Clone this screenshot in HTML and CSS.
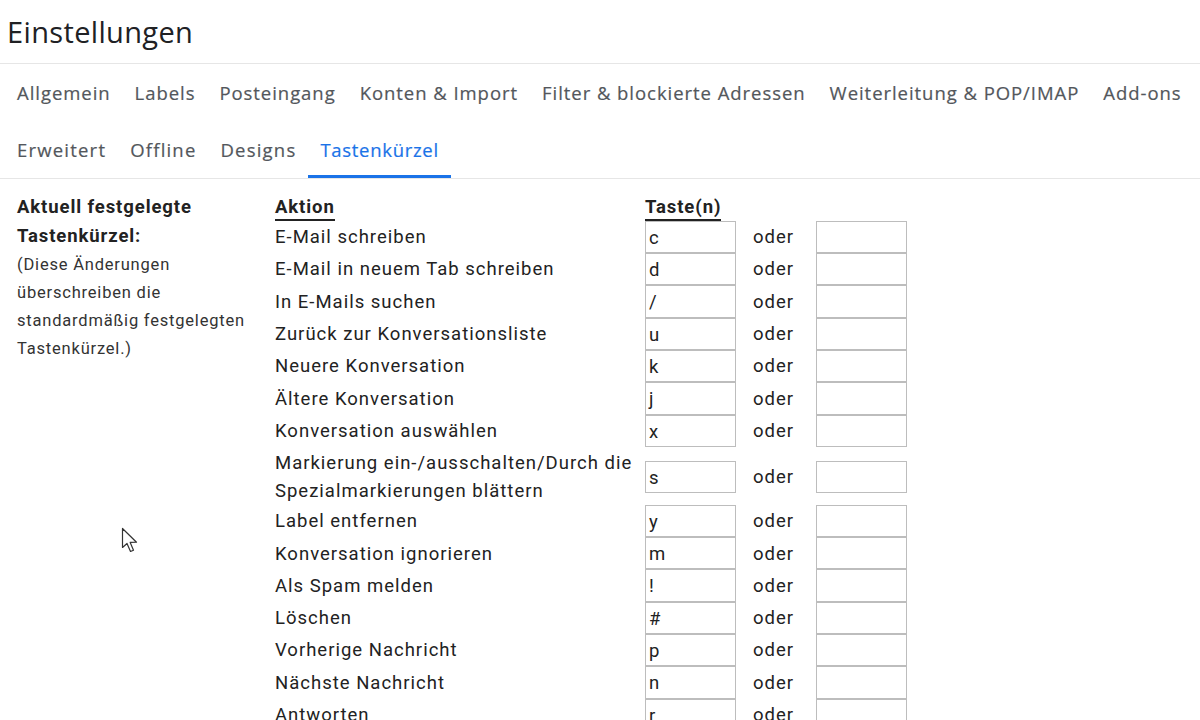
FILE: index.html
```html
<!DOCTYPE html>
<html lang="de">
<head>
<meta charset="utf-8">
<title>Einstellungen</title>
<link rel="stylesheet" href="styles.css">
</head>
<body>
<header class="title-bar">
  <h1 class="title">Einstellungen</h1>
</header>
<nav class="tabs">
  <div class="tab-row">
    <span class="tab">Allgemein</span>
    <span class="tab">Labels</span>
    <span class="tab">Posteingang</span>
    <span class="tab">Konten &amp; Import</span>
    <span class="tab">Filter &amp; blockierte Adressen</span>
    <span class="tab">Weiterleitung &amp; POP/IMAP</span>
    <span class="tab">Add-ons</span>
  </div>
  <div class="tab-row">
    <span class="tab">Erweitert</span>
    <span class="tab">Offline</span>
    <span class="tab">Designs</span>
    <span class="tab active">Tastenkürzel</span>
  </div>
</nav>
<main class="content">
  <aside class="side">
    <div class="side-title">Aktuell festgelegte Tastenkürzel:</div>
    <div class="side-note">(Diese Änderungen überschreiben die standardmäßig festgelegten Tastenkürzel.)</div>
  </aside>
  <table class="keys">
    <thead>
      <tr>
        <th class="col-action"><span class="hd">Aktion</span></th>
        <th class="col-key"><span class="hd">Taste(n)</span></th>
        <th class="col-or"></th>
        <th class="col-key2"></th>
      </tr>
    </thead>
    <tbody>
      <tr><td>E-Mail schreiben</td><td><div class="key">c</div></td><td class="or">oder</td><td><div class="key"></div></td></tr>
      <tr><td>E-Mail in neuem Tab schreiben</td><td><div class="key">d</div></td><td class="or">oder</td><td><div class="key"></div></td></tr>
      <tr><td>In E-Mails suchen</td><td><div class="key">/</div></td><td class="or">oder</td><td><div class="key"></div></td></tr>
      <tr><td>Zurück zur Konversationsliste</td><td><div class="key">u</div></td><td class="or">oder</td><td><div class="key"></div></td></tr>
      <tr><td>Neuere Konversation</td><td><div class="key">k</div></td><td class="or">oder</td><td><div class="key"></div></td></tr>
      <tr><td>Ältere Konversation</td><td><div class="key">j</div></td><td class="or">oder</td><td><div class="key"></div></td></tr>
      <tr><td>Konversation auswählen</td><td><div class="key">x</div></td><td class="or">oder</td><td><div class="key"></div></td></tr>
      <tr class="tall"><td>Markierung ein-/ausschalten/Durch die Spezialmarkierungen blättern</td><td><div class="key">s</div></td><td class="or">oder</td><td><div class="key"></div></td></tr>
      <tr><td>Label entfernen</td><td><div class="key">y</div></td><td class="or">oder</td><td><div class="key"></div></td></tr>
      <tr><td>Konversation ignorieren</td><td><div class="key">m</div></td><td class="or">oder</td><td><div class="key"></div></td></tr>
      <tr><td>Als Spam melden</td><td><div class="key">!</div></td><td class="or">oder</td><td><div class="key"></div></td></tr>
      <tr><td>Löschen</td><td><div class="key">#</div></td><td class="or">oder</td><td><div class="key"></div></td></tr>
      <tr><td>Vorherige Nachricht</td><td><div class="key">p</div></td><td class="or">oder</td><td><div class="key"></div></td></tr>
      <tr><td>Nächste Nachricht</td><td><div class="key">n</div></td><td class="or">oder</td><td><div class="key"></div></td></tr>
      <tr><td>Antworten</td><td><div class="key">r</div></td><td class="or">oder</td><td><div class="key"></div></td></tr>
    </tbody>
  </table>
</main>
<svg class="cursor" width="20" height="28" viewBox="0 0 20 28" aria-hidden="true">
  <path d="M1.5 1.5 L1.5 20.5 L6 16.5 L9.5 24.5 L12.5 23.2 L9.2 15.4 L15.5 15.2 Z" fill="#fff" stroke="#333" stroke-width="1.2" stroke-linejoin="round"/>
</svg>
</body>
</html>
```

FILE: styles.css
```css
* { box-sizing: border-box; }
html, body { margin: 0; padding: 0; background: #fff; }
body {
  font-family: Roboto, "Liberation Sans", sans-serif;
  color: #222;
  width: 1200px;
  height: 720px;
  overflow: hidden;
  position: relative;
}
.title-bar {
  height: 64px;
  border-bottom: 1px solid #e6e6e6;
  padding-left: 7px;
}
.title {
  margin: 0;
  font-family: "Open Sans", Roboto, sans-serif;
  font-weight: 400;
  font-size: 29px;
  line-height: 64px;
  color: #202124;
  letter-spacing: 0.35px;
}
.tabs {
  border-bottom: 1px solid #e6e6e6;
  padding-left: 5px;
}
.tab-row {
  display: flex;
  height: 57px;
}
.tab {
  font-family: "Open Sans", Roboto, sans-serif;
  font-weight: 500;
  font-size: 18.5px;
  color: #53575c;
  padding: 0 12px;
  line-height: 57px;
  white-space: nowrap;
  letter-spacing: 0.95px;
  -webkit-text-stroke: 0.2px #53575c;
}
.tab-row + .tab-row .tab { letter-spacing: 1.2px; }
.tab-row + .tab-row .tab.active {
  letter-spacing: 0.7px;
  color: #1a73e8;
  -webkit-text-stroke: 0.2px #1a73e8;
  box-shadow: inset 0 -3px 0 #1a73e8;
}
.content {
  display: flex;
  padding-top: 14px;
}
.side {
  width: 275px;
  padding-left: 17px;
  padding-right: 10px;
  flex: none;
}
.side-title {
  font-weight: 700;
  font-size: 18.5px;
  line-height: 29px;
  letter-spacing: 0.9px;
  color: #222;
  width: 210px;
}
.side-note {
  font-size: 16.5px;
  line-height: 28px;
  letter-spacing: 0.8px;
  color: #333;
}
.keys {
  border-collapse: collapse;
  font-size: 18.5px;
  letter-spacing: 1px;
}
.keys th {
  text-align: left;
  font-weight: 700;
  padding: 0;
  height: 28px;
  vertical-align: top;
  line-height: 28px;
  letter-spacing: 0.9px;
}
.hd {
  display: inline-block;
  border-bottom: 2px solid #222;
  line-height: 24px;
}
.col-action { width: 370px; }
.col-key { width: 91px; }
.col-or { width: 80px; }
.col-key2 { width: 91px; }
.keys td {
  padding: 0;
  height: 32.3px;
  vertical-align: middle;
  line-height: 28px;
  color: #222;
}
.keys tr.tall td {
  height: 58px;
  padding: 2px 0 0;
}
.keys tr.tall td:first-child { padding-right: 4px; }
.key {
  width: 91px;
  height: 32.3px;
  border: 1px solid #bdbdbd;
  margin-top: -0.5px;
  padding: 2px 0 0 3px;
  font-size: 18.5px;
  line-height: 28px;
  color: #222;
}
.or {
  padding-left: 17px !important;
}
.cursor {
  position: absolute;
  left: 121px;
  top: 527px;
}
```
